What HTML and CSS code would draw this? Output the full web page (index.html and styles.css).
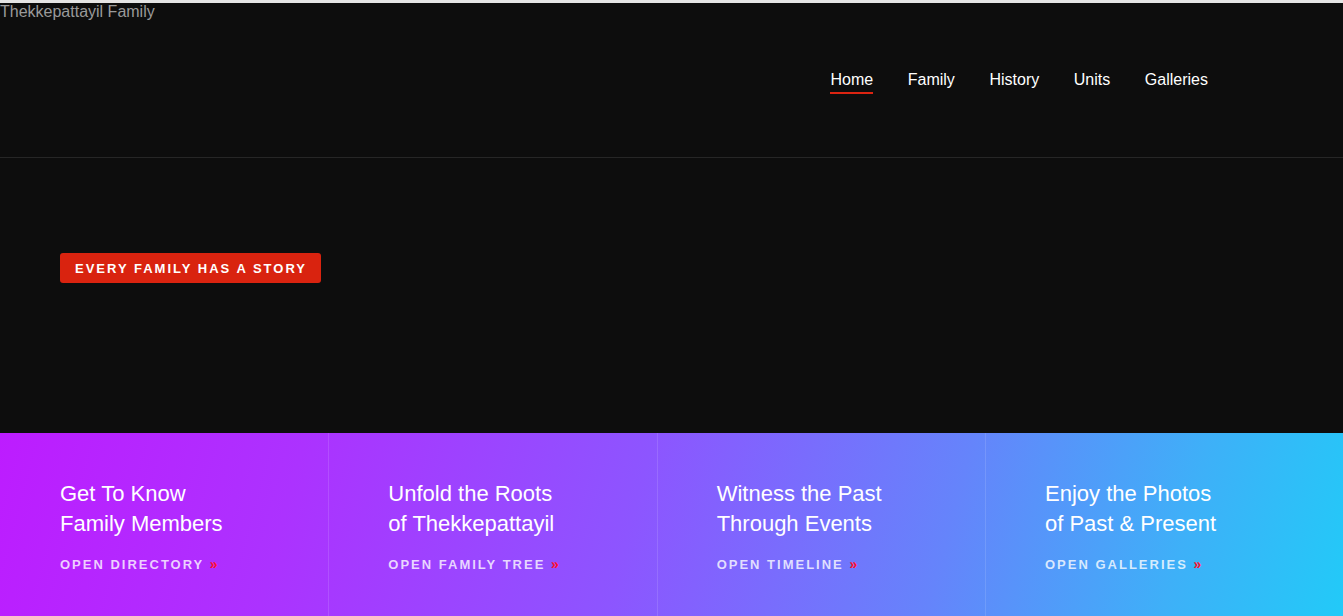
FILE: index.html
```html
<!DOCTYPE html>
<html lang="en">
<head>
<meta charset="utf-8">
<title>Thekkepattayil Family</title>
<link rel="stylesheet" href="styles.css">
</head>
<body>
<div class="topline"></div>
<header class="header">
  <div class="logo">Thekkepattayil Family</div>
  <nav class="nav">
    <a class="nav-link active" href="#">Home</a>
    <a class="nav-link" href="#">Family</a>
    <a class="nav-link" href="#">History</a>
    <a class="nav-link" href="#">Units</a>
    <a class="nav-link" href="#">Galleries</a>
  </nav>
</header>
<section class="hero">
  <span class="badge">EVERY FAMILY HAS A STORY</span>
</section>
<section class="features">
  <div class="feature">
    <h3 class="feature-title">Get To Know<br>Family Members</h3>
    <a class="feature-link" href="#">OPEN DIRECTORY <span class="chev">»</span></a>
  </div>
  <div class="feature">
    <h3 class="feature-title">Unfold the Roots<br>of Thekkepattayil</h3>
    <a class="feature-link" href="#">OPEN FAMILY TREE <span class="chev">»</span></a>
  </div>
  <div class="feature">
    <h3 class="feature-title">Witness the Past<br>Through Events</h3>
    <a class="feature-link" href="#">OPEN TIMELINE <span class="chev">»</span></a>
  </div>
  <div class="feature">
    <h3 class="feature-title">Enjoy the Photos<br>of Past &amp; Present</h3>
    <a class="feature-link" href="#">OPEN GALLERIES <span class="chev">»</span></a>
  </div>
</section>
</body>
</html>
```
FILE: styles.css
```css
* { box-sizing: border-box; }
html, body { margin: 0; padding: 0; }
body {
  background: #0d0d0d;
  font-family: "Liberation Sans", Arial, sans-serif;
  color: #fff;
  overflow: hidden;
}
.topline {
  height: 3px;
  background: #e4e4e4;
}
.header {
  height: 155px;
  border-bottom: 1px solid #262626;
  display: flex;
  justify-content: space-between;
  align-items: flex-start;
}
.logo {
  font-size: 16px;
  line-height: 18px;
  color: #9a9a9a;
}
.nav {
  display: flex;
  gap: 34.6px;
  margin-top: 68px;
  margin-right: 135px;
}
.nav-link {
  color: #fff;
  text-decoration: none;
  font-size: 16px;
  line-height: 18px;
  padding-bottom: 3px;
  border-bottom: 2px solid transparent;
}
.nav-link.active { border-bottom-color: #dc2411; }
.hero {
  height: 275px;
  padding: 95px 60px 0;
}
.badge {
  display: inline-block;
  background: #d9230f;
  color: #fff;
  font-size: 13px;
  font-weight: bold;
  letter-spacing: 2px;
  line-height: 31px;
  height: 30px;
  padding: 0 14px 0 15px;
  border-radius: 3px;
}
.features {
  display: grid;
  grid-template-columns: repeat(3, 328.33px) 1fr;
  height: 183px;
  background: linear-gradient(105deg, #bd1cff 0%, #ac32ff 22%, #8d55ff 47%, #6584fb 70%, #3eb0f8 87%, #22caf8 100%);
}
.feature {
  padding: 46px 60px 0;
  box-shadow: inset 1px 0 0 rgba(255,255,255,0.12);
}
.feature:first-child { box-shadow: none; }
.feature-title {
  margin: 0 0 16px;
  font-size: 22px;
  line-height: 30px;
  font-weight: normal;
  color: #fff;
}
.feature-link {
  color: rgba(255,255,255,0.78);
  text-decoration: none;
  font-size: 13px;
  font-weight: bold;
  letter-spacing: 2px;
}
.chev {
  color: #ff1030;
  letter-spacing: 0;
  font-size: 14px;
}
```
